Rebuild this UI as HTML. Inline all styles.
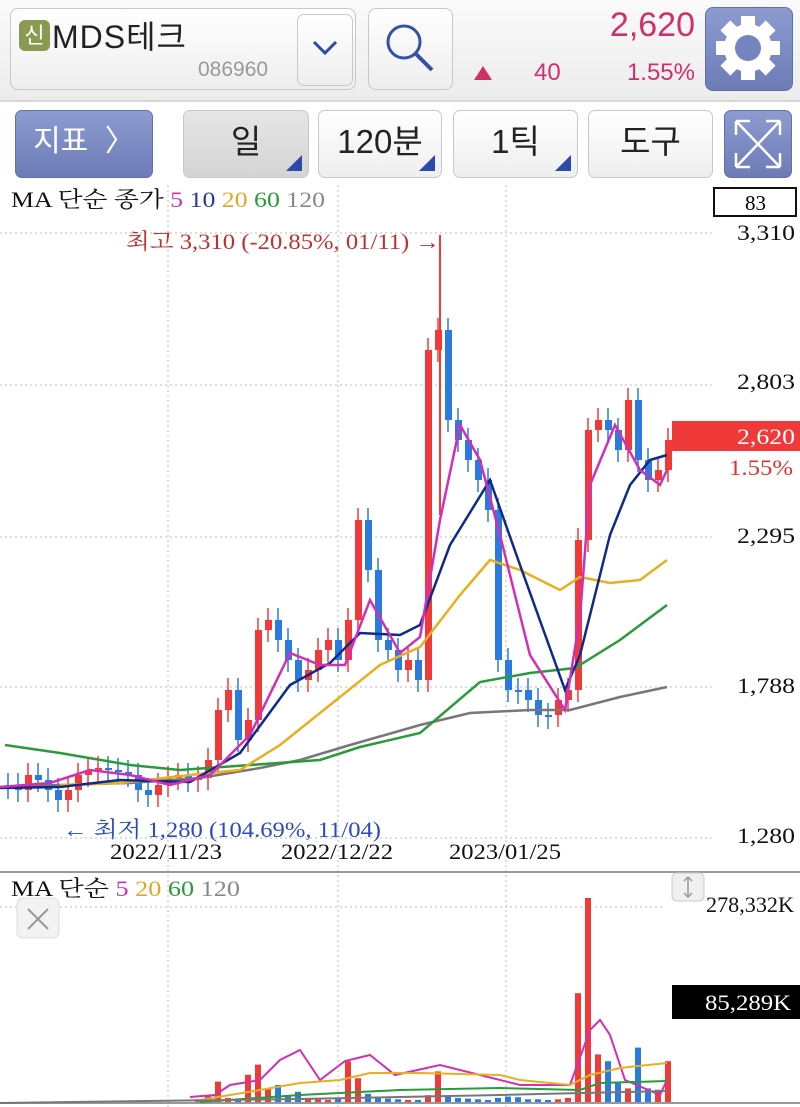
<!DOCTYPE html><html><head><meta charset="utf-8"><style>
body{margin:0;width:800px;height:1107px;overflow:hidden;background:#fff;font-family:"Liberation Sans","Noto Sans CJK KR",sans-serif;position:relative}
.a{position:absolute}
.hdr{left:0;top:0;width:800px;height:100px;background:linear-gradient(#fafafa,#ececec);border-bottom:2px solid #d8d8d8}
.box{background:linear-gradient(#fff,#eee);border:1px solid #c8c8c8;border-radius:8px}
.tb{top:110px;height:66px;border-radius:7px;font-size:33px;color:#222;text-align:center;line-height:62px}
.tri{position:absolute;right:6px;bottom:6px;width:0;height:0;border-left:16px solid transparent;border-bottom:16px solid #2c4aa8}
.blue{background:linear-gradient(#8c9bd0,#6d7cb6);border:1px solid #6070a8;color:#fff}
</style></head><body>
<div class="a hdr"></div>
<div class="a box" style="left:10px;top:8px;width:344px;height:80px"></div>
<div class="a" style="left:19px;top:20px;width:31px;height:31px;background:#8a9a50;border-radius:6px;color:#fff;font-size:22px;line-height:31px;text-align:center">신</div>
<div class="a" style="left:52px;top:12px;font-size:32px;color:#222;letter-spacing:1px">MDS테크</div>
<div class="a" style="left:198px;top:58px;font-size:21px;color:#999">086960</div>
<div class="a box" style="left:297px;top:14px;width:54px;height:70px;border-radius:7px"></div>
<svg class="a" style="left:310px;top:38px" width="30" height="20"><path d="M4 4 L15 15 L26 4" fill="none" stroke="#2c4aa8" stroke-width="3"/></svg>
<div class="a box" style="left:368px;top:8px;width:83px;height:80px"></div>
<svg class="a" style="left:380px;top:18px" width="60" height="60"><circle cx="24" cy="24" r="16" fill="none" stroke="#3550a8" stroke-width="3"/><path d="M36 36 L52 52" stroke="#3550a8" stroke-width="4"/></svg>
<div class="a" style="left:600px;top:6px;font-size:34px;color:#d0306a;width:95px;text-align:right">2,620</div>
<svg class="a" style="left:472px;top:64px" width="22" height="18"><path d="M2 16 L11 2 L20 16Z" fill="#d0306a"/></svg>
<div class="a" style="left:534px;top:59px;font-size:24px;color:#d0306a">40</div>
<div class="a" style="left:615px;top:59px;font-size:24px;color:#d0306a;width:80px;text-align:right">1.55%</div>
<div class="a blue" style="left:705px;top:7px;width:86px;height:82px;border-radius:8px"></div>
<svg class="a" style="left:715px;top:14px" width="66" height="68" viewBox="0 0 66 68"><g fill="#fff" transform="translate(33 34)"><circle r="24"/><g id="t"><rect x="-7" y="-32" width="14" height="14"/></g><use href="#t" transform="rotate(45)"/><use href="#t" transform="rotate(90)"/><use href="#t" transform="rotate(135)"/><use href="#t" transform="rotate(180)"/><use href="#t" transform="rotate(225)"/><use href="#t" transform="rotate(270)"/><use href="#t" transform="rotate(315)"/><circle r="13" fill="#7584bf"/></g></svg>

<div class="a blue tb" style="left:15px;width:136px;font-size:30px">지표 &nbsp;〉</div>
<div class="a tb box" style="left:183px;width:124px;background:linear-gradient(#e6e6e6,#d4d4d4)">일<span class="tri"></span></div>
<div class="a tb box" style="left:318px;width:122px">120분<span class="tri"></span></div>
<div class="a tb box" style="left:453px;width:123px">1틱<span class="tri"></span></div>
<div class="a tb box" style="left:588px;width:123px">도구</div>
<div class="a blue tb" style="left:724px;width:66px"></div>
<svg class="a" style="left:733px;top:118px" width="50" height="52"><g fill="none" stroke="#fff" stroke-width="2.5"><path d="M3 3 L47 49 M47 3 L3 49 M3 3h14 M3 3v14 M47 3h-14 M47 3v14 M3 49h14 M3 49v-14 M47 49h-14 M47 49v-14"/></g></svg>

<svg class="a" style="left:0;top:185px" width="800" height="922" id="ch">
<g stroke="#bbb" stroke-dasharray="2 3" stroke-width="1">
<path d="M0 48H712 M0 200H712 M0 352H712 M0 502H712 M0 653H712 M0 722H665"/>
<path d="M168 0V922 M338 0V922 M506 0V922"/>
</g>
<line x1="0" y1="687" x2="800" y2="687" stroke="#999" stroke-width="2"/>
<line x1="0" y1="918" x2="800" y2="918" stroke="#999" stroke-width="2"/>
<g id="cd"></g>
<polyline fill="none" stroke="#777" stroke-width="2.5" points="0,602 60,600 130,598 200,593 260,583 300,575 350,560 420,540 470,528 530,525 570,525 620,512 667,502"/>
<polyline fill="none" stroke="#2a9a3a" stroke-width="2.5" points="5,560 60,568 130,580 180,585 250,580 320,575 360,562 420,548 480,497 530,488 575,483 620,455 667,420"/>
<polyline fill="none" stroke="#e8b020" stroke-width="2.5" points="60,600 120,598 190,590 240,585 280,560 330,520 380,480 420,462 460,410 490,375 520,385 560,405 580,392 610,398 640,395 667,375"/>
<polyline fill="none" stroke="#102a8a" stroke-width="2.5" points="0,603 60,602 120,595 190,597 240,568 290,500 330,478 360,448 400,450 420,440 450,360 490,295 520,380 565,505 580,470 610,350 630,300 650,275 667,270"/>
<polyline fill="none" stroke="#d030b8" stroke-width="2.5" points="0,602 50,598 90,585 130,590 170,600 210,590 250,550 290,468 320,480 345,480 370,415 400,468 420,452 440,335 460,240 480,275 500,350 530,470 565,525 580,432 590,300 615,240 640,285 660,300 667,285"/>
<polyline fill="none" stroke="#d030b8" stroke-width="2" points="190,912 215,910 230,900 260,895 280,875 300,865 320,895 345,876 370,870 395,890 440,880 480,890 520,900 570,900 590,845 600,835 610,850 625,895 660,910 667,895"/>
<polyline fill="none" stroke="#e8b020" stroke-width="2" points="200,915 260,905 300,898 340,895 370,888 420,888 500,890 520,895 570,900 590,890 620,883 667,878"/>
<polyline fill="none" stroke="#2a9a3a" stroke-width="2" points="200,917 300,910 400,905 500,903 580,905 600,898 667,896"/>
<polyline fill="none" stroke="#777" stroke-width="2" points="0,918 300,914 500,910 667,906"/>
<g font-family="Liberation Serif,Noto Serif CJK SC,serif" font-size="22">
<text x="11" y="22" textLength="314" lengthAdjust="spacingAndGlyphs"><tspan fill="#111">MA 단순 종가 </tspan><tspan fill="#d030b8">5 </tspan><tspan fill="#2a3a9a">10 </tspan><tspan fill="#e0a820">20 </tspan><tspan fill="#2a9a3a">60 </tspan><tspan fill="#888">120</tspan></text>
<text x="11" y="711" textLength="229" lengthAdjust="spacingAndGlyphs"><tspan fill="#111">MA 단순 </tspan><tspan fill="#d030b8">5 </tspan><tspan fill="#e0a820">20 </tspan><tspan fill="#2a9a3a">60 </tspan><tspan fill="#888">120</tspan></text>
<text x="126" y="64" fill="#c03030" textLength="314" lengthAdjust="spacingAndGlyphs">최고 3,310 (-20.85%, 01/11) →</text>
<text x="63" y="652" fill="#2a4ac0" textLength="318" lengthAdjust="spacingAndGlyphs">← 최저 1,280 (104.69%, 11/04)</text>
</g>
<g font-family="Liberation Serif,serif" font-size="22" fill="#111" lengthAdjust="spacingAndGlyphs">
<text x="110" y="674" textLength="112" lengthAdjust="spacingAndGlyphs">2022/11/23</text><text x="281" y="674" textLength="112" lengthAdjust="spacingAndGlyphs">2022/12/22</text><text x="449" y="674" textLength="112" lengthAdjust="spacingAndGlyphs">2023/01/25</text>
<text x="737" y="55" textLength="58" lengthAdjust="spacingAndGlyphs">3,310</text><text x="737" y="204" textLength="58" lengthAdjust="spacingAndGlyphs">2,803</text><text x="737" y="358" textLength="58" lengthAdjust="spacingAndGlyphs">2,295</text><text x="737" y="508" textLength="58" lengthAdjust="spacingAndGlyphs">1,788</text><text x="737" y="658" textLength="58" lengthAdjust="spacingAndGlyphs">1,280</text>
<text x="706" y="727" textLength="88" lengthAdjust="spacingAndGlyphs">278,332K</text>
</g>
<rect x="714" y="3" width="82" height="28" fill="#fff" stroke="#111" stroke-width="2"/>
<text x="745" y="25" font-family="Liberation Serif,serif" font-size="21">83</text>
<rect x="672" y="236" width="128" height="30" fill="#f03a3a"/>
<text x="737" y="259" fill="#fff" font-family="Liberation Serif,serif" font-size="22" textLength="58" lengthAdjust="spacingAndGlyphs">2,620</text>
<text x="729" y="290" fill="#e03030" font-family="Liberation Serif,serif" font-size="22" textLength="64" lengthAdjust="spacingAndGlyphs">1.55%</text>
<rect x="672" y="800" width="128" height="34" fill="#000"/>
<text x="705" y="825" fill="#fff" font-family="Liberation Serif,serif" font-size="22" textLength="86" lengthAdjust="spacingAndGlyphs">85,289K</text>
<rect x="17" y="713" width="42" height="40" rx="6" fill="#f2f2f2" stroke="#ddd"/>
<path d="M28 724 L48 744 M48 724 L28 744" stroke="#999" stroke-width="2"/>
<rect x="672" y="688" width="32" height="28" rx="5" fill="#f0f0f0" stroke="#ccc"/>
<path d="M688 692 V712 M684 696 L688 692 L692 696 M684 708 L688 712 L692 708" stroke="#999" fill="none" stroke-width="1.5"/>
</svg>
<script>
var ys=[785,790,775,780,790,800,790,775,770,768,770,772,775,790,795,785,778,775,780,778,760,710,690,740,720,630,620,640,660,680,670,650,640,660,620,520,570,640,650,670,660,680,350,330,420,440,460,480,510,660,690,690,700,715,715,700,690,540,430,420,430,450,400,460,480,470,440];
var vol=[0,0,0,0,0,0,0,0,0,0,0,0,0,0,0,0,0,0,0,4,10,30,6,3,40,55,20,25,8,15,6,4,3,5,60,35,12,8,5,4,3,3,10,45,8,6,5,4,3,6,8,7,4,4,3,4,6,160,300,70,60,30,20,80,20,18,60];
var g=document.getElementById('cd'),s='',p=ys[0];
for(var i=0;i<ys.length;i++){var x=5+i*10,c=ys[i]-185,o=p-185,up=c<o,col=up?'#f03a3a':'#2a7ae0';
var t=Math.min(c,o),h=Math.max(Math.abs(c-o),2);
s+='<line x1="'+(x+3)+'" x2="'+(x+3)+'" y1="'+(t-12)+'" y2="'+(t+h+12)+'" stroke="'+col+'" stroke-width="1.5"/>';
s+='<rect x="'+x+'" y="'+t+'" width="7" height="'+h+'" fill="'+col+'"/>';
var v=vol[i]*0.68;if(v>0)s+='<rect x="'+x+'" y="'+(917-v)+'" width="6" height="'+v+'" fill="'+col+'"/>';
p=ys[i];}
s+='<line x1="440" x2="440" y1="50" y2="330" stroke="#f03a3a" stroke-width="2"/>';
g.innerHTML=s;
</script>
</body></html>
